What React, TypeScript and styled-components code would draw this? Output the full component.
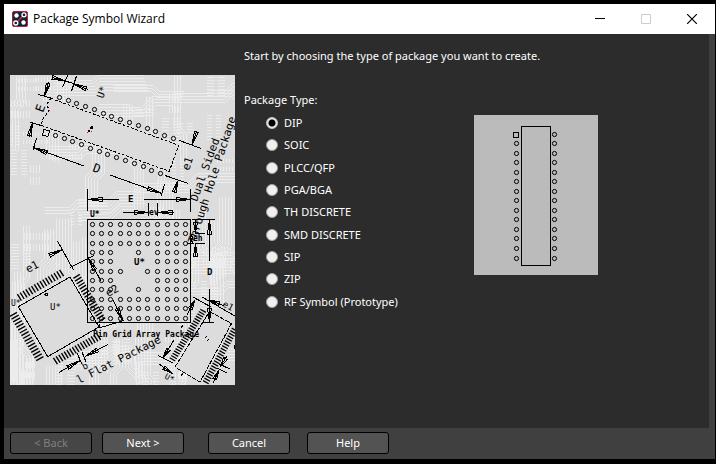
import React, { useState } from "react";
import styled, { createGlobalStyle } from "styled-components";

const GlobalStyle = createGlobalStyle`
  * { box-sizing: border-box; }
  html, body, #root { height: 100%; }
  body {
    margin: 0;
    background: #000;
    color: #fff;
    font-family: "Noto Sans", "Open Sans", sans-serif;
    font-size: 11px;
    line-height: 16px;
  }
`;

const Window = styled.main`
  min-height: 100%;
  display: flex;
  flex-direction: column;
  border: solid #000;
  border-width: 4px 1px 5px 4px;
  background: #2c2c2c;
`;

const TitleBar = styled.header`
  display: flex;
  align-items: center;
  height: 30px;
  padding-left: 8px;
  background: #fff;
  color: #000;
`;

const Title = styled.h1`
  flex: 1;
  margin: 0 0 0 5px;
  font-family: "Open Sans", "Noto Sans", sans-serif;
  font-size: 12px;
  font-weight: 400;
  line-height: 16px;
`;

const CaptionButton = styled.button`
  width: 46px;
  height: 30px;
  padding: 0;
  border: 0;
  background: transparent;
  color: #000;
  display: grid;
  place-items: center;
  &:disabled { color: #ccc; }
`;

const Body = styled.div`
  flex: 1;
  display: flex;
  gap: 9px;
  padding-left: 6px;
  border-right: 6px solid #404040;
`;

const Artwork = styled.svg`
  flex: none;
  display: block;
  margin-top: 41px;
  width: 225px;
  height: 310px;
`;

const Content = styled.section`
  flex: 1;
  padding-top: 14px;
`;

const Intro = styled.p`
  margin: 0 0 28px;
`;

const Choices = styled.div`
  display: flex;
  align-items: flex-start;
`;

const TypeGroup = styled.fieldset`
  width: 230px;
  margin: 0;
  padding: 0;
  border: 0;
`;

const Legend = styled.legend`
  padding: 0;
`;

const TypeList = styled.div`
  display: grid;
  grid-auto-rows: 1fr;
  min-height: 201px;
  margin-top: 4px;
  padding-left: 22px;
`;

const TypeOption = styled.label`
  display: flex;
  align-items: center;
  gap: 6px;
`;

const Radio = styled.input`
  appearance: none;
  width: 12px;
  height: 12px;
  margin: 0;
  border: 1px solid #a0a0a0;
  border-radius: 50%;
  background: #f0f0f0;
  &:checked {
    border-color: #c8c8c8;
    background: radial-gradient(circle, #000 3px, #e8e8e8 4px);
  }
`;

const Preview = styled.svg`
  flex: none;
  display: block;
  width: 124px;
  height: 160px;
  margin-top: 23px;
  background: #bbb;
`;

const Footer = styled.footer`
  display: flex;
  align-items: flex-start;
  gap: 10px;
  height: 31px;
  padding: 4px 6px;
  background: #404040;
`;

const Group = styled.div<{ $gap: number }>`
  display: flex;
  gap: ${(p) => p.$gap}px;
  margin-right: 14px;
`;

const Button = styled.button`
  width: 82px;
  height: 22px;
  padding: 0;
  border: 1px solid #000;
  border-radius: 3px;
  background: #535353;
  color: #fff;
  font: inherit;
  line-height: 20px;
  &:disabled { background: #464646; color: #808080; }
`;

const Drawing = styled.g`
  fill: none;
  stroke: #000;
  stroke-width: 1;
  shape-rendering: crispEdges;
`;

const Lettering = styled.text`
  fill: #000;
  stroke: none;
  font-family: "DejaVu Sans Mono", monospace;
`;

const snap = (n: number) => Math.floor(n) + 0.5;

const Pin = ({ x, y }: { x: number; y: number }) => (
  <circle cx={snap(x)} cy={snap(y)} r={2.1} shapeRendering="geometricPrecision" />
);

type Pt = [number, number];

/* Slim open arrowhead with its tip at `to`, pointing away from `from`. */
const Arrow = ({ from, to, len = 14 }: { from: Pt; to: Pt; len?: number }) => {
  const a = Math.atan2(to[1] - from[1], to[0] - from[0]);
  const bx = to[0] - Math.cos(a) * len;
  const by = to[1] - Math.sin(a) * len;
  const nx = -Math.sin(a) * 2;
  const ny = Math.cos(a) * 2;
  return (
    <path
      d={`M${from} L${to} L${bx + nx},${by + ny} L${bx - nx},${by - ny} L${to}`}
    />
  );
};

const Note = ({ x, y, r = 0, s = 11, b = false, children }: {
  x: number; y: number; r?: number; s?: number; b?: boolean; children: string;
}) => (
  <Lettering fontSize={s} fontWeight={b ? 700 : 400} transform={`translate(${x} ${y}) rotate(${r})`}>
    {children}
  </Lettering>
);

/* Bundles of parallel copper tracks with 45 degree bends, and footprints of small pads. */
function buildTraces() {
  let seed = 41;
  const rnd = (n: number) => {
    seed = (seed * 1103515245 + 12345) % 2147483648;
    return Math.floor((seed / 2147483648) * n);
  };
  let d = "";
  for (let i = 0; i < 62; i++) {
    const x = 6 + rnd(222);
    const y = 60 + rnd(310);
    const n = 3 + rnd(4);
    const a = 22 + rnd(40);
    const k = 3 + rnd(9);
    const b = 14 + rnd(36);
    const s = rnd(2) ? 1 : -1;
    const upright = rnd(10) < 8;
    for (let j = 0; j < n; j++) {
      const o = j * 3;
      d += upright
        ? `M${x + o + 0.5} ${y + 0.5}v${a - s * j}l${s * k} ${k}v${b}`
        : `M${x + 0.5} ${y + o + 0.5}h${a - s * j}l${k} ${s * k}h${b}`;
    }
  }
  for (let i = 0; i < 46; i++) {
    const x = 8 + rnd(215);
    const y = 76 + rnd(300);
    const n = 4 + rnd(7);
    const w = 4 + rnd(5);
    const row = rnd(2) === 0;
    for (let j = 0; j < n; j++) {
      const o = j * 3;
      d += row
        ? `M${x + o + 0.5} ${y}v${w}m0 4v${w}`
        : `M${x} ${y + o + 0.5}h${w}m4 0h${w}`;
    }
  }
  return d;
}
const traces = buildTraces();

const gridX = [92, 101, 110, 120, 129, 138, 147, 157, 167, 176, 185];
const gridY = [224, 233, 243, 252, 261, 271, 280, 289, 299, 308, 318];
const openCells: Record<number, number[]> = {
  3: [3, 4, 6],
  4: [3, 4, 5, 6],
  5: [4, 5],
  6: [3, 4, 5, 6],
  7: [3, 4, 6],
};

/* Leads along the edge a-b, reaching out along the given offset. */
function leads(a: Pt, b: Pt, out: Pt, count: number) {
  let d = "";
  for (let i = 0; i < count; i++) {
    const t = (i + 0.5) / count;
    const x = a[0] + (b[0] - a[0]) * t;
    const y = a[1] + (b[1] - a[1]) * t;
    const px = x + out[0] * 0.2;
    const py = y + out[1] * 0.2;
    d += `M${px.toFixed(1)} ${py.toFixed(1)}L${(x + out[0]).toFixed(1)} ${(y + out[1]).toFixed(1)}`;
  }
  return d;
}

const PackageArtwork = () => (
  <Artwork viewBox="10 75 225 310" role="img" aria-label="Package drawings">
    <rect x="10" y="75" width="225" height="310" fill="#dcdcdc" />
    <path d={traces} fill="none" stroke="#ececec" strokeWidth="1" />
    <g fill="#dcdcdc">
      <path d="M50 98L179 145L169 171L41 125Z" />
      <path d="M87 219H191V323H87Z" />
      <path d="M18 307L70 277L99 327L48 357Z" />
      <path d="M210 312L232 323L200 382L175 367Z" />
    </g>
    <Drawing>
      <path
        strokeDasharray="3 1.5"
        d="M50.7 98.3L178.7 145.3L169.3 171.3L41 125.3L43 119L49 111L47 104Z"
      />
      {Array.from({ length: 14 }, (_, i) => (
        <Pin key={i} x={59.3 + i * 8.77} y={97.3 + i * 3.15} />
      ))}
      {Array.from({ length: 13 }, (_, i) => (
        <Pin key={i} x={55.3 + i * 8.78} y={135.5 + i * 3.14} />
      ))}
      <path d="M44 129.500l5.500 1.500l-1.500 5.500l-5.500-1.500Z" />

      <Arrow from={[52, 77.500]} to={[64, 80.500]} len={12} />
      <Arrow from={[88, 89.500]} to={[73, 83.500]} />
      <path d="M62 80L75 84M68 75L62.500 87M76.500 76L71.500 91" />
      <Arrow from={[48.500, 82.500]} to={[44.500, 96]} len={13} />
      <path d="M38 94.500L51 98M30 122L41 125.500" />
      <Arrow from={[29, 137]} to={[32.500, 123]} len={13} />
      <path d="M36.500 138L33 150" />
      <Arrow from={[84, 166]} to={[33.500, 147.700]} />
      <Arrow from={[110, 175]} to={[161, 193.300]} />
      <path d="M164.700 184L161 196M179 140.300L201 148.500M165 175.500L188.500 183.500" />
      <Arrow from={[196.700, 131.500]} to={[191.700, 145]} />
      <Arrow from={[174, 193]} to={[178, 180.700]} len={12} />
      <path d="M90 128h3M91 127h2M88 131h2" strokeWidth="1.500" />
      <path d="M87 132.500h1M91 131.500h1M49 110.500h1" stroke="#f00" />

      <rect x="87.500" y="219.500" width="103" height="103" />
      {gridY.map((y, r) =>
        gridX.map((x, c) =>
          openCells[r]?.includes(c) ? null : <Pin key={`${r}-${c}`} x={x} y={y} />
        )
      )}
      <path d="M87.500 189V211M190.500 189V212M148.500 203V216M157.500 203V216" />
      <Arrow from={[119, 199.500]} to={[88, 199.500]} />
      <Arrow from={[144, 199.500]} to={[190, 199.500]} />
      <Arrow from={[123, 212.500]} to={[148, 212.500]} />
      <Arrow from={[174, 212.500]} to={[158, 212.500]} />
      <path d="M192 219.500H215M195 233.500H205M195 243.500H205M202 322.500H214" />
      <Arrow from={[209.500, 261]} to={[209.500, 220]} />
      <Arrow from={[209.500, 289]} to={[209.500, 322]} />
      <Arrow from={[195.500, 220]} to={[195.500, 233]} len={11} />
      <Arrow from={[195.500, 257]} to={[195.500, 244]} len={12} />
      <path d="M190 235l3 2l-2 3l2 3h-6" />

      <path d="M18.300 306.700L70 277L99 327L47.700 356.700Z" />
      <circle cx="46.500" cy="294.500" r="1.500" />
      <g strokeWidth="1.400" shapeRendering="geometricPrecision">
        <path d={leads([21, 303], [66, 277], [-5, -8], 16)} />
        <path d={leads([18, 310], [46, 357], [-9, 5], 17)} />
        <path d={leads([51, 357], [97, 331], [5, 8], 17)} />
        <path d={leads([71, 278], [98, 324], [8, -5], 17)} />
      </g>
      <path d="M57.500 241L73.500 270M70 267.500L94 255.500M99 328L124 320.500" />
      <Arrow from={[49, 255.500]} to={[62.500, 249.500]} />
      <Arrow from={[101, 281]} to={[88, 257.500]} />
      <Arrow from={[113, 300]} to={[123, 321]} />
      <Arrow from={[59, 372.500]} to={[80, 360.500]} />
      <Arrow from={[108, 344.500]} to={[85, 356.500]} />
      <path d="M77 353l5 11M82 352l4 10M99 328v-4" />

      <path d="M209.500 311.500L231.500 323.500L200 382L175 367Z" strokeDasharray="5 1" />
      <g strokeWidth="1.300" shapeRendering="geometricPrecision">
        <path d={leads([208, 312], [176, 363], [-7, -4], 22)} />
        <path d={leads([231, 326], [201, 381], [7, 4], 22)} />
      </g>
      <path d="M193 297L211 307M202 297L235 316M158 355.500L173 363M219 364l11 5M217 368l10 5" />
      <Arrow from={[224, 306]} to={[210, 300]} len={10} />
      <Arrow from={[187, 315]} to={[195, 300]} len={10} />
      <Arrow from={[174, 340]} to={[163, 358]} len={10} />
      <Arrow from={[159, 364]} to={[173, 374]} len={11} />
      <Arrow from={[227, 356]} to={[220, 367]} len={10} />
      <Arrow from={[213, 383]} to={[219, 370]} len={10} />
      <path d="M181 328l2-3M181 376l2-3M205 338l2-2M207 341l2-2M234 345v4" />
    </Drawing>
    <Note x={43} y={113} r={-70} s={12}>E</Note>
    <Note x={103} y={99} r={-70} s={10}>U*</Note>
    <Note x={92} y={171} r={20} s={12}>D</Note>
    <Note x={189} y={171} r={-72}>e1</Note>
    <Note x={197} y={202} r={-70}>Dual Sided</Note>
    <Note x={195} y={244} r={-72}>Through Hole Package</Note>
    <Note x={128} y={202} s={9} b>E</Note>
    <Note x={149} y={215} s={8} b>ev</Note>
    <Note x={90} y={217} s={8} b>U*</Note>
    <Note x={134} y={265} s={9} b>U*</Note>
    <Note x={207} y={275} s={9} b>D</Note>
    <Note x={193} y={241} s={8} b>eh</Note>
    <Note x={93} y={337} s={8} b>Pin Grid Array Package</Note>
    <Note x={28} y={273} r={-28}>e1</Note>
    <Note x={108} y={297} r={-28}>e2</Note>
    <Note x={50} y={310} s={9}>U*</Note>
    <Note x={11} y={306} s={8}>U*</Note>
    <Note x={84} y={370} r={-28} s={9}>b</Note>
    <Note x={79} y={384} r={-27}>l Flat Package</Note>
    <Note x={222} y={306} r={28} s={9}>e1</Note>
    <Note x={164} y={378} r={28} s={8}>U*</Note>
  </Artwork>
);

const previewRows = [19, 28, 38, 47, 57, 66, 76, 85, 95, 104, 114, 123, 133, 143];

const DipPreview = () => (
  <Preview viewBox="0 0 124 160" role="img" aria-label="DIP package">
    <Drawing>
      <rect x="47.500" y="11.500" width="29" height="139" />
      <rect x="39.500" y="17.500" width="5" height="5" />
      {previewRows.map((y, i) => (
        <React.Fragment key={y}>
          {i > 0 && <Pin x={42} y={y} />}
          <Pin x={80} y={y} />
        </React.Fragment>
      ))}
    </Drawing>
  </Preview>
);

const AppIcon = () => (
  <svg width="16" height="16" viewBox="0 0 16 16" aria-hidden="true">
    <rect x="0.500" y="0.500" width="15" height="15" rx="1.500" fill="#0d2436" stroke="#c41e3a" />
    <path d="M1 10V2.500Q1 1 2.500 1H9" fill="none" stroke="#5c2438" />
    <path d="M5 11L11 5" stroke="#e0203c" strokeWidth="1.500" />
    <circle cx="4.500" cy="4.500" r="2.200" fill="#fff" />
    <circle cx="11.500" cy="11.500" r="2.200" fill="#fff" />
    <circle cx="12" cy="3.800" r="2" fill="#0d2436" stroke="#fff" strokeWidth="1.300" />
    <circle cx="3.800" cy="12" r="2" fill="#0d2436" stroke="#fff" strokeWidth="1.300" />
  </svg>
);

const types = [
  "DIP", "SOIC", "PLCC/QFP", "PGA/BGA", "TH DISCRETE",
  "SMD DISCRETE", "SIP", "ZIP", "RF Symbol (Prototype)",
];

export default function App() {
  const [selected, setSelected] = useState("DIP");
  return (
    <>
      <GlobalStyle />
      <Window>
        <TitleBar>
          <AppIcon />
          <Title>Package Symbol Wizard</Title>
          <CaptionButton aria-label="Minimize">
            <svg width="10" height="11" stroke="currentColor"><path d="M0 4.500H10" /></svg>
          </CaptionButton>
          <CaptionButton aria-label="Maximize" disabled>
            <svg width="10" height="10" fill="none" stroke="currentColor"><path d="M.5.5h9v9h-9z" /></svg>
          </CaptionButton>
          <CaptionButton aria-label="Close">
            <svg width="10" height="10" stroke="currentColor" strokeWidth="1.200"><path d="M0 0L10 10M10 0L0 10" /></svg>
          </CaptionButton>
        </TitleBar>
        <Body>
          <PackageArtwork />
          <Content>
            <Intro>Start by choosing the type of package you want to create.</Intro>
            <Choices>
              <TypeGroup>
                <Legend>Package Type:</Legend>
                <TypeList>
                  {types.map((t) => (
                    <TypeOption key={t}>
                      <Radio
                        type="radio"
                        name="package-type"
                        checked={selected === t}
                        onChange={() => setSelected(t)}
                      />
                      {t}
                    </TypeOption>
                  ))}
                </TypeList>
              </TypeGroup>
              <DipPreview />
            </Choices>
          </Content>
        </Body>
        <Footer>
          <Group $gap={10}>
            <Button disabled>&lt; Back</Button>
            <Button>Next &gt;</Button>
          </Group>
          <Group $gap={17}>
            <Button>Cancel</Button>
            <Button>Help</Button>
          </Group>
        </Footer>
      </Window>
    </>
  );
}
